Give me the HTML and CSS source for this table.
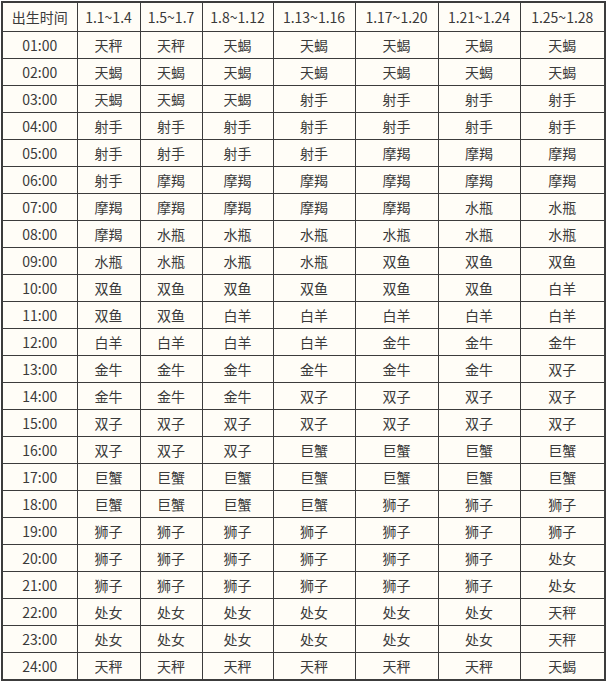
FILE: index.html
```html
<!DOCTYPE html>
<html lang="zh">
<head>
<meta charset="utf-8">
<link rel="stylesheet" href="styles.css">
</head>
<body>
<table class="zodiac">
<colgroup>
<col class="c0"><col class="c1"><col class="c2"><col class="c3"><col class="c4"><col class="c5"><col class="c6"><col class="c7">
</colgroup>
<tr class="head"><td>出生时间</td><td>1.1~1.4</td><td>1.5~1.7</td><td>1.8~1.12</td><td>1.13~1.16</td><td>1.17~1.20</td><td>1.21~1.24</td><td>1.25~1.28</td></tr>
<tr><td>01:00</td><td>天秤</td><td>天秤</td><td>天蝎</td><td>天蝎</td><td>天蝎</td><td>天蝎</td><td>天蝎</td></tr>
<tr><td>02:00</td><td>天蝎</td><td>天蝎</td><td>天蝎</td><td>天蝎</td><td>天蝎</td><td>天蝎</td><td>天蝎</td></tr>
<tr><td>03:00</td><td>天蝎</td><td>天蝎</td><td>天蝎</td><td>射手</td><td>射手</td><td>射手</td><td>射手</td></tr>
<tr><td>04:00</td><td>射手</td><td>射手</td><td>射手</td><td>射手</td><td>射手</td><td>射手</td><td>射手</td></tr>
<tr><td>05:00</td><td>射手</td><td>射手</td><td>射手</td><td>射手</td><td>摩羯</td><td>摩羯</td><td>摩羯</td></tr>
<tr><td>06:00</td><td>射手</td><td>摩羯</td><td>摩羯</td><td>摩羯</td><td>摩羯</td><td>摩羯</td><td>摩羯</td></tr>
<tr><td>07:00</td><td>摩羯</td><td>摩羯</td><td>摩羯</td><td>摩羯</td><td>摩羯</td><td>水瓶</td><td>水瓶</td></tr>
<tr><td>08:00</td><td>摩羯</td><td>水瓶</td><td>水瓶</td><td>水瓶</td><td>水瓶</td><td>水瓶</td><td>水瓶</td></tr>
<tr><td>09:00</td><td>水瓶</td><td>水瓶</td><td>水瓶</td><td>水瓶</td><td>双鱼</td><td>双鱼</td><td>双鱼</td></tr>
<tr><td>10:00</td><td>双鱼</td><td>双鱼</td><td>双鱼</td><td>双鱼</td><td>双鱼</td><td>双鱼</td><td>白羊</td></tr>
<tr><td>11:00</td><td>双鱼</td><td>双鱼</td><td>白羊</td><td>白羊</td><td>白羊</td><td>白羊</td><td>白羊</td></tr>
<tr><td>12:00</td><td>白羊</td><td>白羊</td><td>白羊</td><td>白羊</td><td>金牛</td><td>金牛</td><td>金牛</td></tr>
<tr><td>13:00</td><td>金牛</td><td>金牛</td><td>金牛</td><td>金牛</td><td>金牛</td><td>金牛</td><td>双子</td></tr>
<tr><td>14:00</td><td>金牛</td><td>金牛</td><td>金牛</td><td>双子</td><td>双子</td><td>双子</td><td>双子</td></tr>
<tr><td>15:00</td><td>双子</td><td>双子</td><td>双子</td><td>双子</td><td>双子</td><td>双子</td><td>双子</td></tr>
<tr><td>16:00</td><td>双子</td><td>双子</td><td>双子</td><td>巨蟹</td><td>巨蟹</td><td>巨蟹</td><td>巨蟹</td></tr>
<tr><td>17:00</td><td>巨蟹</td><td>巨蟹</td><td>巨蟹</td><td>巨蟹</td><td>巨蟹</td><td>巨蟹</td><td>巨蟹</td></tr>
<tr><td>18:00</td><td>巨蟹</td><td>巨蟹</td><td>巨蟹</td><td>巨蟹</td><td>狮子</td><td>狮子</td><td>狮子</td></tr>
<tr><td>19:00</td><td>狮子</td><td>狮子</td><td>狮子</td><td>狮子</td><td>狮子</td><td>狮子</td><td>狮子</td></tr>
<tr><td>20:00</td><td>狮子</td><td>狮子</td><td>狮子</td><td>狮子</td><td>狮子</td><td>狮子</td><td>处女</td></tr>
<tr><td>21:00</td><td>狮子</td><td>狮子</td><td>狮子</td><td>狮子</td><td>狮子</td><td>狮子</td><td>处女</td></tr>
<tr><td>22:00</td><td>处女</td><td>处女</td><td>处女</td><td>处女</td><td>处女</td><td>处女</td><td>天秤</td></tr>
<tr><td>23:00</td><td>处女</td><td>处女</td><td>处女</td><td>处女</td><td>处女</td><td>处女</td><td>天秤</td></tr>
<tr><td>24:00</td><td>天秤</td><td>天秤</td><td>天秤</td><td>天秤</td><td>天秤</td><td>天秤</td><td>天蝎</td></tr>
</table>
</body>
</html>
```
FILE: styles.css
```css
html, body {
  margin: 0;
  padding: 0;
  background: #ffffff;
}
body {
  padding: 1px 0 0 1px;
}
.zodiac {
  border-collapse: collapse;
  table-layout: fixed;
  width: 603px;
  background: #fffdf7;
  border: 2px solid #3c3c3c;
  font-family: "Noto Sans CJK SC", "Noto Sans", sans-serif;
  font-size: 14px;
  color: #3a3a3a;
}
.c0 { width: 75px; }
.c1 { width: 63px; }
.c2 { width: 62px; }
.c3 { width: 71px; }
.c4 { width: 82px; }
.c5 { width: 83px; }
.c6 { width: 82px; }
.c7 { width: 85px; }
.zodiac td {
  border: 1px solid #3c3c3c;
  text-align: center;
  vertical-align: middle;
  padding: 0;
  height: 26px;
  line-height: 16px;
}
.zodiac .head td {
  height: 28px;
}
```
